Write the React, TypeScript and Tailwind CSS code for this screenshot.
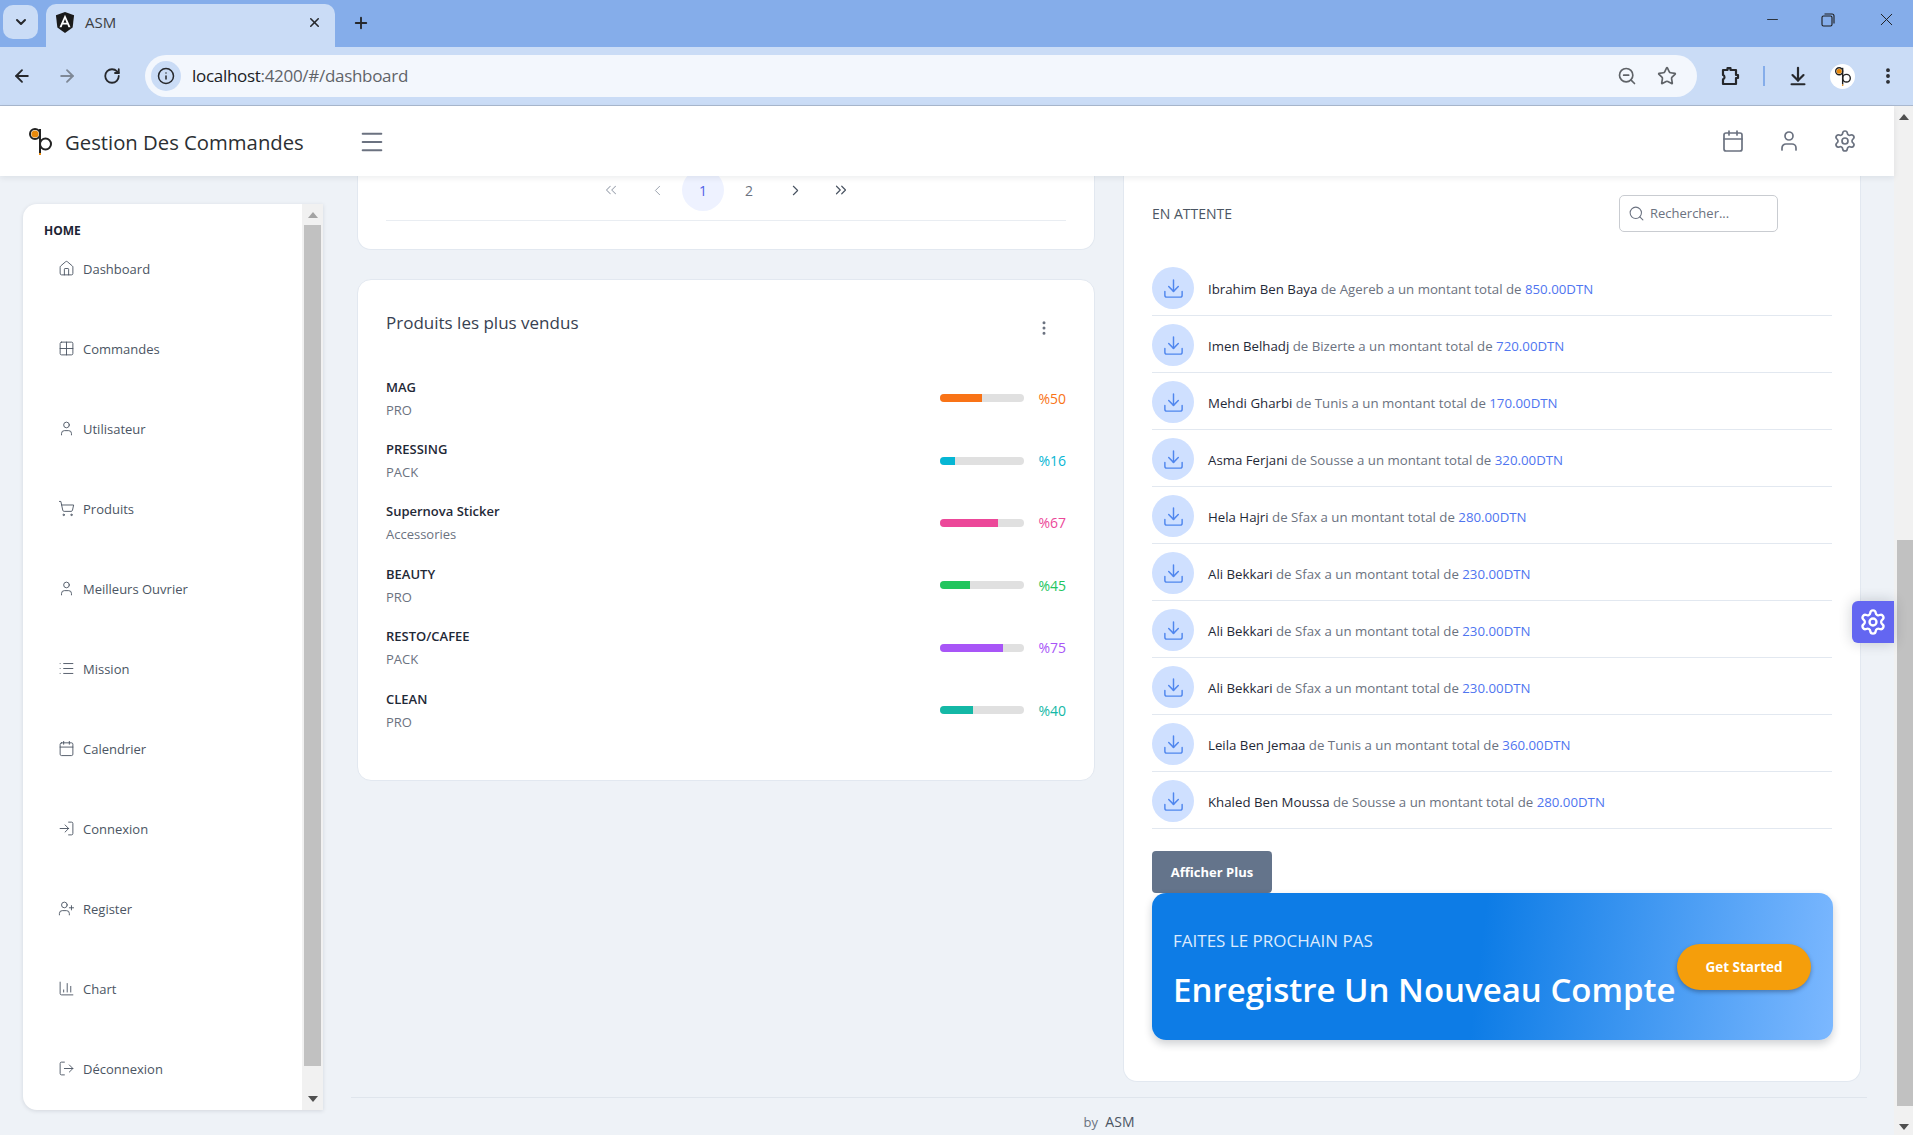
import React from 'react';
import {
  ArrowDownToLine,
  ArrowLeft,
  ArrowRight,
  BarChart3,
  Calendar,
  ChevronDown,
  ChevronLeft,
  ChevronRight,
  ChevronsLeft,
  ChevronsRight,
  Download,
  EllipsisVertical,
  Grid2x2,
  House,
  Info,
  List,
  LogIn,
  LogOut,
  Menu,
  Minus,
  Plus,
  RotateCw,
  Search,
  Settings,
  ShoppingCart,
  Star,
  User,
  UserPlus,
  X,
  ZoomOut,
} from 'lucide-react';

const sidebarItems = [
  { label: 'Dashboard', icon: House },
  { label: 'Commandes', icon: Grid2x2 },
  { label: 'Utilisateur', icon: User },
  { label: 'Produits', icon: ShoppingCart },
  { label: 'Meilleurs Ouvrier', icon: User },
  { label: 'Mission', icon: List },
  { label: 'Calendrier', icon: Calendar },
  { label: 'Connexion', icon: LogIn },
  { label: 'Register', icon: UserPlus },
  { label: 'Chart', icon: BarChart3 },
  { label: 'Déconnexion', icon: LogOut },
];

const products = [
  { name: 'MAG', type: 'PRO', pct: '%50', fill: 'w-[50%] bg-[#f97316]', text: 'text-[#f97316]' },
  { name: 'PRESSING', type: 'PACK', pct: '%16', fill: 'w-[17%] bg-[#06b6d4]', text: 'text-[#06b6d4]' },
  { name: 'Supernova Sticker', type: 'Accessories', pct: '%67', fill: 'w-[68%] bg-[#ec4899]', text: 'text-[#ec4899]' },
  { name: 'BEAUTY', type: 'PRO', pct: '%45', fill: 'w-[35%] bg-[#22c55e]', text: 'text-[#22c55e]' },
  { name: 'RESTO/CAFEE', type: 'PACK', pct: '%75', fill: 'w-[75%] bg-[#a855f7]', text: 'text-[#a855f7]' },
  { name: 'CLEAN', type: 'PRO', pct: '%40', fill: 'w-[39%] bg-[#14b8a6]', text: 'text-[#14b8a6]' },
];

const orders = [
  { name: 'Ibrahim Ben Baya', city: 'Agereb', total: '850.00DTN' },
  { name: 'Imen Belhadj', city: 'Bizerte', total: '720.00DTN' },
  { name: 'Mehdi Gharbi', city: 'Tunis', total: '170.00DTN' },
  { name: 'Asma Ferjani', city: 'Sousse', total: '320.00DTN' },
  { name: 'Hela Hajri', city: 'Sfax', total: '280.00DTN' },
  { name: 'Ali Bekkari', city: 'Sfax', total: '230.00DTN' },
  { name: 'Ali Bekkari', city: 'Sfax', total: '230.00DTN' },
  { name: 'Ali Bekkari', city: 'Sfax', total: '230.00DTN' },
  { name: 'Leila Ben Jemaa', city: 'Tunis', total: '360.00DTN' },
  { name: 'Khaled Ben Moussa', city: 'Sousse', total: '280.00DTN' },
];

const Logo = ({ className }: { className: string }) => (
  <svg viewBox="0 0 23 27" className={className} fill="none">
    <circle cx="6" cy="6" r="5" stroke="#222" strokeWidth="2" />
    <circle cx="6" cy="6" r="3.6" fill="#e8890c" />
    <path d="M11 1v24" stroke="#222" strokeWidth="2" />
    <path d="M11 25v2" stroke="#e8890c" strokeWidth="2" />
    <circle cx="16.5" cy="16" r="5.5" stroke="#222" strokeWidth="2" />
  </svg>
);

const AngularIcon = () => (
  <svg viewBox="0 0 20 22" className="h-[21px] w-[20px]">
    <path d="M10 0 0.5 3.4 2 16.2 10 22 18 16.2 19.5 3.4Z" fill="#1a1a1a" />
    <path d="M10 3 4.2 16h2.2l1.1-2.8h5l1.1 2.8h2.2ZM8.4 11.3 10 7.4l1.6 3.9Z" fill="#fff" />
  </svg>
);

const ExtensionIcon = () => (
  <svg viewBox="0 0 22 22" className="h-[22px] w-[22px]" fill="none" stroke="#26282c" strokeWidth="2.2" strokeLinejoin="round">
    <path d="M3 5h4.5V3.2h3V5H16v5h2v3h-2v6H3v-4.6c2-.4 2-4 0-4.4Z" />
  </svg>
);

const ChromeBar = () => (
  <div className="shrink-0">
    <div className="flex h-[47px] items-end bg-[#85adea]">
      <div className="mb-[8px] ml-[3px] flex h-[34px] w-[35px] items-center justify-center rounded-[10px] bg-[#cadcf6]">
        <ChevronDown size={16} strokeWidth={3} className="text-[#26282c]" />
      </div>
      <div className="ml-[8px] flex h-[43px] w-[289px] items-center rounded-t-[10px] bg-[#cadcf6] pb-[7px] pl-[9px] pr-[13px]">
        <AngularIcon />
        <span className="ml-[10px] flex-1 text-[15px] text-[#3c4043]">ASM</span>
        <X size={15} strokeWidth={2.5} className="text-[#26282c]" />
      </div>
      <div className="mb-[15px] ml-[17px] flex-1">
        <Plus size={18} strokeWidth={2.5} className="text-[#26282c]" />
      </div>
      <div className="mb-[17px] flex items-center">
        <Minus size={17} strokeWidth={1.2} className="text-[#1c1c1c]" />
        <svg viewBox="0 0 14 14" className="ml-[40px] h-[14px] w-[14px]" fill="none" stroke="#1c1c1c" strokeWidth="1.1">
          <rect x="1" y="3" width="10" height="10" rx="1.5" />
          <path d="M3.5 1H11a2 2 0 0 1 2 2v7.5" />
        </svg>
        <X size={21} strokeWidth={1.1} className="ml-[41px] mr-[16px] text-[#1c1c1c]" />
      </div>
    </div>
    <div className="flex h-[59px] items-center border-b border-[#a9b8cf] bg-[#cadcf6]">
      <ArrowLeft size={20} strokeWidth={2.2} className="ml-[12px] text-[#26282c]" />
      <ArrowRight size={20} strokeWidth={2.2} className="ml-[25px] text-[#7e8896]" />
      <RotateCw size={18} strokeWidth={2.4} className="ml-[26px] text-[#26282c]" />
      <div className="ml-[24px] flex h-[42px] w-[1552px] items-center rounded-full bg-[#f3f7fd] pl-[6px]">
        <div className="flex h-[30px] w-[30px] items-center justify-center rounded-full bg-[#cadcf6]">
          <Info size={18} strokeWidth={2} className="text-[#26282c]" />
        </div>
        <div className="ml-[11px] flex-1 text-[17px] tracking-[-0.3px] text-[#5f6368]">
          <span className="text-[#202124]">localhost</span>:4200/#/dashboard
        </div>
        <ZoomOut size={20} strokeWidth={2} className="text-[#5f6368]" />
        <Star size={20} strokeWidth={2} className="ml-[20px] mr-[20px] text-[#5f6368]" />
      </div>
      <div className="ml-[23px]">
        <ExtensionIcon />
      </div>
      <div className="ml-[21px] h-[20px] w-[2px] bg-[#85adea]" />
      <ArrowDownToLine size={22} strokeWidth={2.4} className="ml-[22px] text-[#26282c]" />
      <div className="ml-[21px] flex h-[25px] w-[25px] items-center justify-center rounded-full bg-white">
        <Logo className="h-[19px] w-[16px]" />
      </div>
      <EllipsisVertical size={20} strokeWidth={2.6} className="ml-[23px] text-[#26282c]" />
    </div>
  </div>
);

const TopHeader = () => (
  <header className="z-10 flex h-[70px] shrink-0 items-center bg-white pl-[29px] pr-[37px] shadow-[0_2px_6px_rgba(15,23,42,0.08)]">
    <Logo className="h-[27px] w-[23px]" />
    <span className="ml-[13px] mt-[3px] text-[20.3px] font-medium text-[#2b2f33]">Gestion Des Commandes</span>
    <Menu size={28} strokeWidth={1.7} className="ml-[54px] mt-[1px] text-[#6b7280]" />
    <div className="ml-auto flex items-center gap-[32px] text-[#6b7280]">
      <Calendar size={24} strokeWidth={1.7} />
      <User size={24} strokeWidth={1.7} />
      <Settings size={24} strokeWidth={1.7} />
    </div>
  </header>
);

const Sidebar = () => (
  <aside className="mb-[25px] ml-[23px] mr-[28px] mt-[28px] flex h-[906px] w-[300px] shrink-0 overflow-hidden rounded-l-[14px] bg-white shadow-[0_1px_4px_rgba(15,23,42,0.12)]">
    <div className="flex-1 pl-[21px] pt-[20px]">
      <div className="text-[12px] font-bold leading-[14px] text-[#1c2434]">HOME</div>
      <nav className="mt-[15px]">
        {sidebarItems.map(({ label, icon: Icon }) => (
          <div key={label} className="flex h-[80px] items-start pl-[14px] pt-[6px] text-[13px] leading-[20px] text-[#4b5563]">
            <Icon size={17} strokeWidth={1.3} className="mt-[1px]" />
            <span className="ml-[8px]">{label}</span>
          </div>
        ))}
      </nav>
    </div>
    <div className="flex w-[21px] flex-col items-center bg-[#f1f1f1]">
      <div className="flex h-[21px] items-center justify-center">
        <div className="border-x-[5px] border-b-[6px] border-x-transparent border-b-[#a3a3a3]" />
      </div>
      <div className="h-[841px] w-[17px] bg-[#c1c1c1]" />
      <div className="flex flex-1 items-end justify-center pb-[8px]">
        <div className="border-x-[5px] border-t-[6px] border-x-transparent border-t-[#505050]" />
      </div>
    </div>
  </aside>
);

const pageBtn = 'flex h-[42px] w-[42px] items-center justify-center rounded-full';

const Pagination = () => (
  <div className="-mt-[7px] flex justify-center gap-[4px] border-b border-[#e9edf2] pb-[9px] text-[14px] text-[#6b7280]">
    <div className={pageBtn}><ChevronsLeft size={18} strokeWidth={1.4} className="text-[#9ca3af]" /></div>
    <div className={pageBtn}><ChevronLeft size={17} strokeWidth={1.4} className="text-[#9ca3af]" /></div>
    <div className={pageBtn + ' bg-[#eef2ff] text-[#4f5fe8]'}>1</div>
    <div className={pageBtn}>2</div>
    <div className={pageBtn}><ChevronRight size={17} strokeWidth={1.6} className="text-[#4b5563]" /></div>
    <div className={pageBtn}><ChevronsRight size={18} strokeWidth={1.6} className="text-[#4b5563]" /></div>
  </div>
);

const TopProducts = () => (
  <section className="mt-[29px] h-[502px] rounded-[14px] border border-[#e2e8f0] bg-white px-[28px] pt-[29px]">
    <div className="flex items-start justify-between">
      <h2 className="text-[17px] font-medium leading-[28px] text-[#374151]">Produits les plus vendus</h2>
      <EllipsisVertical size={18} strokeWidth={2} className="mr-[13px] mt-[10px] text-[#6b7280]" />
    </div>
    <div className="mt-[30px]">
      {products.map((p) => (
        <div key={p.name} className="flex h-[62.4px] items-center justify-between">
          <div>
            <div className="text-[13px] font-semibold leading-[20px] text-[#1f2937]">{p.name}</div>
            <div className="mt-[3px] text-[13px] leading-[20px] text-[#6b7280]">{p.type}</div>
          </div>
          <div className="flex items-center gap-[14px]">
            <div className="h-[8px] w-[84px] overflow-hidden rounded-full bg-[#e0e0e0]">
              <div className={'h-full ' + p.fill} />
            </div>
            <span className={'text-[14px] ' + p.text}>{p.pct}</span>
          </div>
        </div>
      ))}
    </div>
  </section>
);

const PendingOrders = () => (
  <section className="h-[906px] rounded-b-[14px] border border-t-0 border-[#e2e8f0] bg-white px-[28px] pt-[19px]">
    <div className="flex items-center justify-between pr-[54px]">
      <span className="text-[14px] font-medium text-[#4b5563]">EN ATTENTE</span>
      <div className="flex h-[37px] w-[159px] items-center rounded-[5px] border border-[#c9ccd1] px-[8px] text-[13px] text-[#6b7280]">
        <Search size={17} strokeWidth={1.5} />
        <span className="ml-[5px]">Rechercher...</span>
      </div>
    </div>
    <div className="mt-[27px]">
      {orders.map((o, i) => (
        <div key={i} className="flex h-[57px] items-start border-b border-[#e2e8f0] pt-[8px]">
          <div className="flex h-[42px] w-[42px] items-center justify-center rounded-full bg-[#cfe0ff]">
            <Download size={23} strokeWidth={1.5} className="text-[#4f86ee]" />
          </div>
          <div className="ml-[14px] mt-[12px] text-[13.25px] leading-[20px] text-[#6b7280]">
            <span className="text-[#1f2937]">{o.name}</span> de {o.city} a un montant total de{' '}
            <span className="text-[#4f75f0]">{o.total}</span>
          </div>
        </div>
      ))}
    </div>
    <button className="mt-[22px] flex h-[42px] w-[120px] items-center justify-center rounded-[4px] bg-[#64748b] pt-[2px] text-[13px] font-bold text-white">
      Afficher Plus
    </button>
    <div className="flex h-[147px] w-[681px] items-center justify-between rounded-[14px] bg-[linear-gradient(97deg,#0d7ce6_0%,#0d7ce6_48%,#7cb8ff_100%)] pl-[21px] pr-[22px] shadow-[0_4px_8px_rgba(15,23,42,0.2)]">
      <div className="self-start pt-[36px]">
        <div className="text-[17px] font-medium leading-[24px] text-[#dbeafe]">FAITES LE PROCHAIN PAS</div>
        <div className="mt-[13px] text-[33px] font-semibold leading-[48px] text-white">Enregistre Un Nouveau Compte</div>
      </div>
      <button className="flex h-[46px] w-[134px] items-center justify-center rounded-full bg-[#f59e0b] pt-[2px] text-[13.5px] font-bold text-white shadow-[0_2px_4px_rgba(15,23,42,0.35)]">
        Get Started
      </button>
    </div>
  </section>
);

const PageScrollbar = () => (
  <div className="flex w-[19px] shrink-0 flex-col items-center bg-[#f1f1f1]">
    <div className="mt-[8px] border-x-[5px] border-b-[6px] border-x-transparent border-b-[#505050]" />
    <div className="mt-[420px] h-[566px] w-[16px] self-end bg-[#c1c1c1]" />
    <div className="mt-[18px] border-x-[5px] border-t-[6px] border-x-transparent border-t-[#505050]" />
  </div>
);

export default function App() {
  return (
    <div className="flex h-[1135px] w-[1913px] flex-col overflow-hidden bg-[#eef2f7] font-['Open_Sans','Noto_Sans',sans-serif]">
      <ChromeBar />
      <div className="flex min-h-0 flex-1">
        <div className="relative flex min-w-0 flex-1 flex-col">
          <TopHeader />
          <div className="flex min-h-0 flex-1 pr-[27px]">
            <Sidebar />
            <main className="flex-1">
              <div className="grid grid-cols-[738px_738px] gap-[28px] pl-[6px]">
                <div>
                  <section className="h-[74px] overflow-hidden rounded-b-[14px] border border-t-0 border-[#e2e8f0] bg-white px-[28px]">
                    <Pagination />
                  </section>
                  <TopProducts />
                </div>
                <PendingOrders />
              </div>
              <footer className="mt-[15px] border-t border-[#dfe5ec] pt-[14px] text-center text-[13px] leading-[20px] text-[#6b7280]">
                by <span className="ml-[4px] text-[14px] font-medium text-[#4b5563]">ASM</span>
              </footer>
            </main>
          </div>
          <div className="absolute right-0 top-[495px] flex h-[42px] w-[42px] items-center justify-center rounded-l-[6px] bg-[#6366f1] shadow-[0_0_14px_rgba(15,23,42,0.2)]">
            <Settings size={28} strokeWidth={2} className="text-white" />
          </div>
        </div>
        <PageScrollbar />
      </div>
    </div>
  );
}
